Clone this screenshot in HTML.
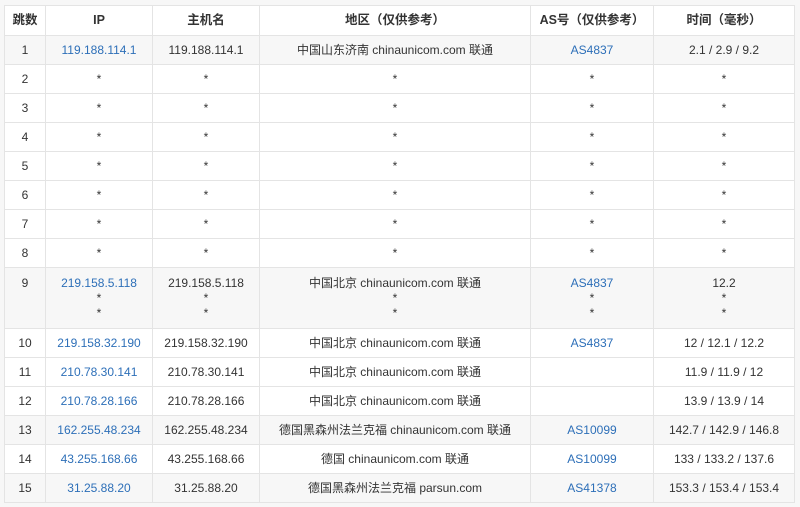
<!DOCTYPE html>
<html><head><meta charset="utf-8"><style>
body{margin:0;background:#fff;width:800px;height:507px;overflow:hidden;font-family:"Liberation Sans","Noto Sans CJK SC",sans-serif;}
.wrap{position:absolute;left:0;top:0;width:800px;height:507px;background:#f7f7f7;}
table{position:absolute;left:4px;top:5px;border-collapse:collapse;width:790px;font-size:12px;color:#333;table-layout:fixed;}
td,th{border:1px solid #e4e4e4;text-align:center;padding:0;height:28px;line-height:15px;}
th{font-weight:bold;height:29px;background:#fff;font-size:12.5px;}
tr{background:#fff;}
tr.g{background:#f7f7f7;}
a{color:#2d6fb8;text-decoration:none;}
tr.t td{height:60px;line-height:15px;}
</style></head><body><div class="wrap">
<table>
<colgroup><col style="width:41px"><col style="width:107px"><col style="width:107px"><col style="width:271px"><col style="width:123px"><col style="width:141px"></colgroup>
<tr><th>跳数</th><th>IP</th><th>主机名</th><th>地区（仅供参考）</th><th>AS号（仅供参考）</th><th>时间（毫秒）</th></tr>
<tr class="g"><td>1</td><td><a>119.188.114.1</a></td><td>119.188.114.1</td><td>中国山东济南 chinaunicom.com 联通</td><td><a>AS4837</a></td><td>2.1 / 2.9 / 9.2</td></tr>
<tr><td>2</td><td>*</td><td>*</td><td>*</td><td>*</td><td>*</td></tr>
<tr><td>3</td><td>*</td><td>*</td><td>*</td><td>*</td><td>*</td></tr>
<tr><td>4</td><td>*</td><td>*</td><td>*</td><td>*</td><td>*</td></tr>
<tr><td>5</td><td>*</td><td>*</td><td>*</td><td>*</td><td>*</td></tr>
<tr><td>6</td><td>*</td><td>*</td><td>*</td><td>*</td><td>*</td></tr>
<tr><td>7</td><td>*</td><td>*</td><td>*</td><td>*</td><td>*</td></tr>
<tr><td>8</td><td>*</td><td>*</td><td>*</td><td>*</td><td>*</td></tr>
<tr class="g t"><td>9<br>&nbsp;<br>&nbsp;</td><td><a>219.158.5.118</a><br>*<br>*</td><td>219.158.5.118<br>*<br>*</td><td>中国北京 chinaunicom.com 联通<br>*<br>*</td><td><a>AS4837</a><br>*<br>*</td><td>12.2<br>*<br>*</td></tr>
<tr><td>10</td><td><a>219.158.32.190</a></td><td>219.158.32.190</td><td>中国北京 chinaunicom.com 联通</td><td><a>AS4837</a></td><td>12 / 12.1 / 12.2</td></tr>
<tr><td>11</td><td><a>210.78.30.141</a></td><td>210.78.30.141</td><td>中国北京 chinaunicom.com 联通</td><td></td><td>11.9 / 11.9 / 12</td></tr>
<tr><td>12</td><td><a>210.78.28.166</a></td><td>210.78.28.166</td><td>中国北京 chinaunicom.com 联通</td><td></td><td>13.9 / 13.9 / 14</td></tr>
<tr class="g"><td>13</td><td><a>162.255.48.234</a></td><td>162.255.48.234</td><td>德国黑森州法兰克福 chinaunicom.com 联通</td><td><a>AS10099</a></td><td>142.7 / 142.9 / 146.8</td></tr>
<tr><td>14</td><td><a>43.255.168.66</a></td><td>43.255.168.66</td><td>德国 chinaunicom.com 联通</td><td><a>AS10099</a></td><td>133 / 133.2 / 137.6</td></tr>
<tr class="g"><td>15</td><td><a>31.25.88.20</a></td><td>31.25.88.20</td><td>德国黑森州法兰克福 parsun.com</td><td><a>AS41378</a></td><td>153.3 / 153.4 / 153.4</td></tr>
</table></div></body></html>
